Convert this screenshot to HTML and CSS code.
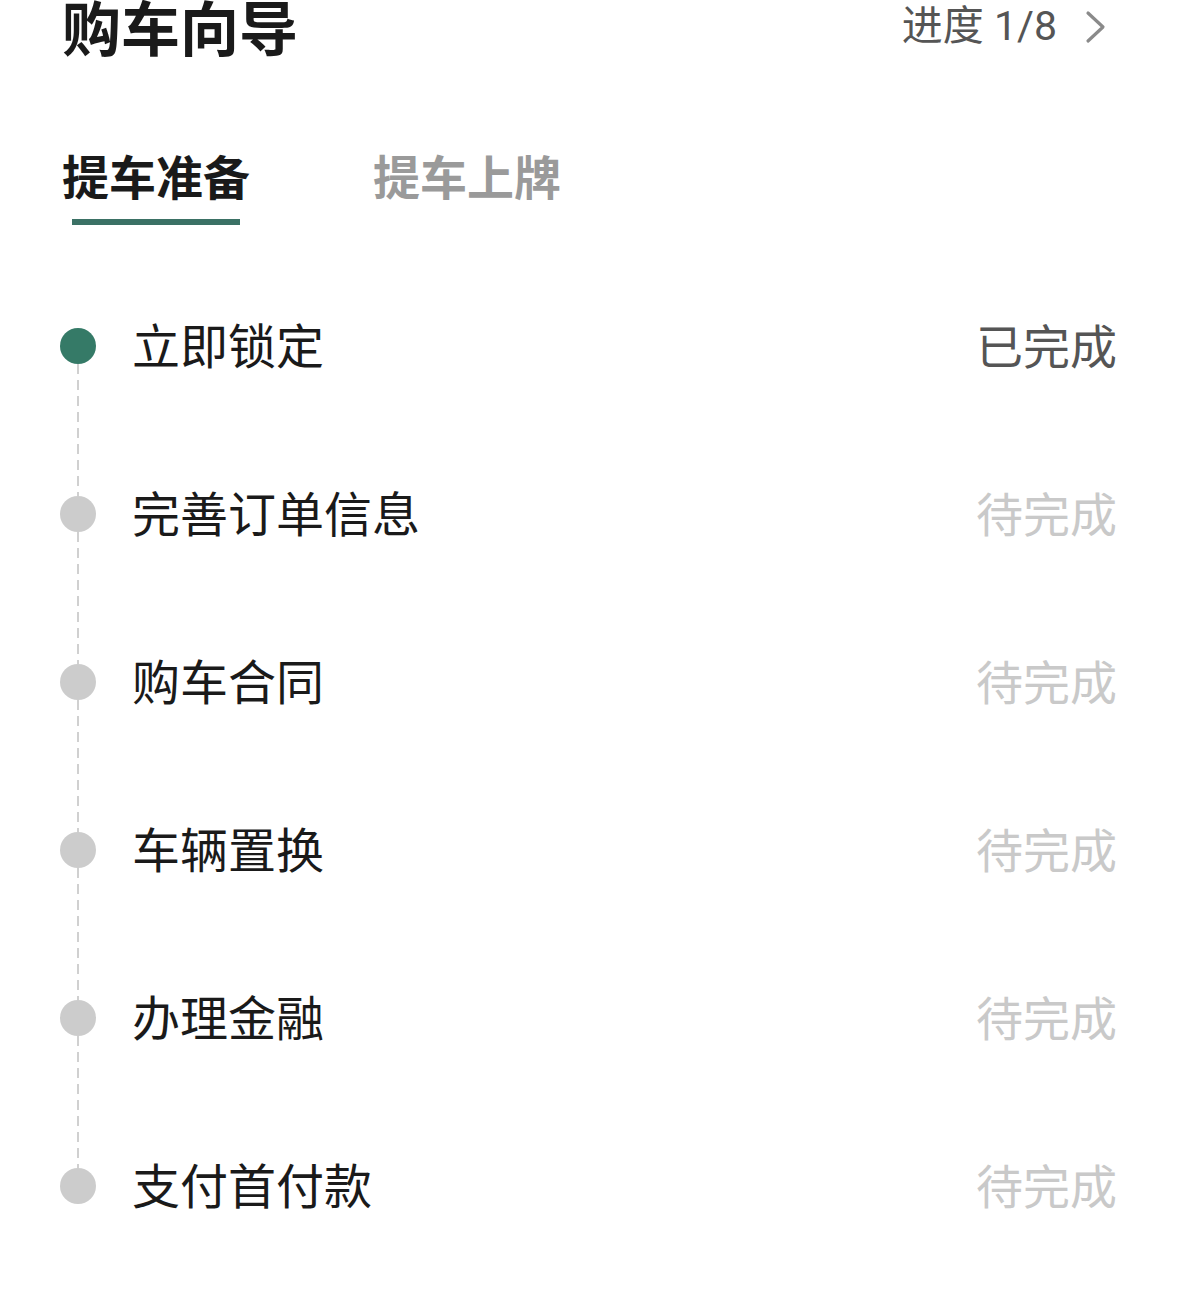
FILE: index.html
```html
<!DOCTYPE html>
<html lang="zh-CN">
<head>
    <meta charset="UTF-8">
    <meta name="viewport" content="width=device-width, initial-scale=1.0">
    <title>购车向导</title>
    <link rel="stylesheet" href="styles.css">
</head>
<body>
    <div class="page">
        <div class="header">
            <h1 class="title">购车向导</h1>
            <div class="progress">
                <span>进度 1/8</span>
                <svg class="chevron" width="22" height="34" viewBox="0 0 22 34">
                    <path d="M3 3 L18 17 L3 31" fill="none" stroke="#8a8a8a" stroke-width="3.2" stroke-linecap="round" stroke-linejoin="round"/>
                </svg>
            </div>
        </div>

        <div class="tabs">
            <div class="tab active">提车准备</div>
            <div class="tab">提车上牌</div>
        </div>

        <ul class="steps">
            <li class="step done">
                <span class="dot"></span>
                <span class="step-name">立即锁定</span>
                <span class="step-status">已完成</span>
            </li>
            <li class="step">
                <span class="dot"></span>
                <span class="step-name">完善订单信息</span>
                <span class="step-status">待完成</span>
            </li>
            <li class="step">
                <span class="dot"></span>
                <span class="step-name">购车合同</span>
                <span class="step-status">待完成</span>
            </li>
            <li class="step">
                <span class="dot"></span>
                <span class="step-name">车辆置换</span>
                <span class="step-status">待完成</span>
            </li>
            <li class="step">
                <span class="dot"></span>
                <span class="step-name">办理金融</span>
                <span class="step-status">待完成</span>
            </li>
            <li class="step">
                <span class="dot"></span>
                <span class="step-name">支付首付款</span>
                <span class="step-status">待完成</span>
            </li>
        </ul>
    </div>
</body>
</html>
```

FILE: styles.css
```css
body {
    margin: 0;
    background: #ffffff;
    font-family: "Noto Sans CJK SC", "Noto Sans", sans-serif;
    color: #1a1a1a;
}
.page {
    padding: 0 62px 0 60px;
}
.header {
    display: flex;
    justify-content: space-between;
    align-items: flex-start;
    margin-top: -4px;
    padding-left: 2px;
}
.title {
    margin: 0;
    font-size: 59px;
    line-height: 1;
    font-weight: bold;
    color: #1a1a1a;
}
.progress {
    display: flex;
    align-items: center;
    gap: 28px;
    margin-top: 10px;
    margin-right: 10px;
    font-family: Roboto, "Noto Sans CJK SC", sans-serif;
    font-size: 41px;
    line-height: 1;
    color: #555555;
}
.tabs {
    display: flex;
    gap: 123px;
    margin-top: 96px;
    padding-left: 2px;
}
.tab {
    position: relative;
    font-size: 47px;
    line-height: 1;
    font-weight: bold;
    color: #9a9a9a;
    padding-bottom: 27px;
}
.tab.active {
    color: #1a1a1a;
}
.tab.active::after {
    content: "";
    position: absolute;
    left: 10px;
    right: 10px;
    bottom: 0;
    height: 6px;
    background: #3b7165;
}
.steps {
    list-style: none;
    margin: 37px 0 0;
    padding: 0;
}
.step {
    position: relative;
    display: flex;
    align-items: center;
    height: 168px;
}
.step:not(:last-child)::after {
    content: "";
    position: absolute;
    left: 17px;
    top: 102px;
    width: 2px;
    height: 132px;
    background: repeating-linear-gradient(to bottom, #d0d0d0 0 10px, transparent 10px 16px);
}
.dot {
    width: 36px;
    height: 36px;
    border-radius: 50%;
    background: #cccccc;
    flex-shrink: 0;
}
.step.done .dot {
    background: #357a67;
}
.step-name {
    flex: 1;
    margin-left: 36px;
    margin-bottom: 6px;
    font-size: 48px;
    color: #1a1a1a;
}
.step-status {
    margin-bottom: 6px;
    font-size: 47px;
    color: #c9c9c9;
}
.step.done .step-status {
    color: #555555;
}
```
